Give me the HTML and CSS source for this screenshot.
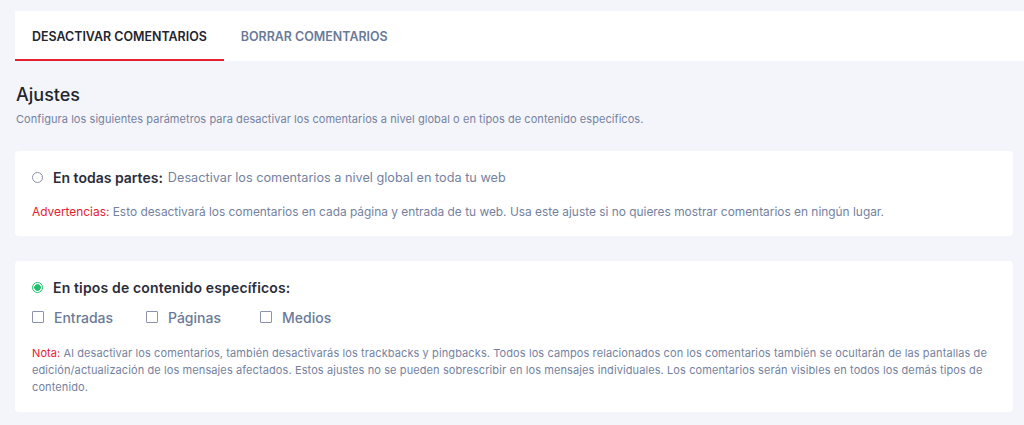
FILE: index.html
```html
<!DOCTYPE html>
<html lang="es">
<head>
<meta charset="utf-8">
<link rel="stylesheet" href="styles.css">
</head>
<body>
<div class="page">
  <nav class="tabs">
    <a class="tab active">DESACTIVAR COMENTARIOS</a>
    <a class="tab">BORRAR COMENTARIOS</a>
  </nav>
  <section class="intro">
    <h2 class="title">Ajustes</h2>
    <p class="desc">Configura los siguientes parámetros para desactivar los comentarios a nivel global o en tipos de contenido específicos.</p>
  </section>
  <div class="card card-global">
    <label class="option">
      <span class="radio"></span>
      <span class="opt-title">En todas partes:</span>
      <span class="opt-desc">Desactivar los comentarios a nivel global en toda tu web</span>
    </label>
    <p class="notice warning"><span class="warn">Advertencias:</span> Esto desactivará los comentarios en cada página y entrada de tu web. Usa este ajuste si no quieres mostrar comentarios en ningún lugar.</p>
  </div>
  <div class="card card-types">
    <label class="option">
      <span class="radio checked"></span>
      <span class="opt-title wide">En tipos de contenido específicos:</span>
    </label>
    <div class="checks">
      <label class="check"><span class="box"></span>Entradas</label>
      <label class="check"><span class="box"></span>Páginas</label>
      <label class="check"><span class="box"></span>Medios</label>
    </div>
    <p class="notice note"><span class="warn">Nota:</span> Al desactivar los comentarios, también desactivarás los trackbacks y pingbacks. Todos los campos relacionados con los comentarios también se ocultarán de las pantallas de edición/actualización de los mensajes afectados. Estos ajustes no se pueden sobrescribir en los mensajes individuales. Los comentarios serán visibles en todos los demás tipos de contenido.</p>
  </div>
</div>
</body>
</html>
```
FILE: styles.css
```css
html, body {
  margin: 0;
  padding: 0;
  background: #f4f5fa;
}
body {
  font-family: Inter, "Noto Sans", sans-serif;
  color: #2c2d3a;
}
.page {
  padding: 11px 0 0 15px;
}
.tabs {
  display: flex;
  background: #fff;
  height: 50px;
}
.tab {
  display: flex;
  align-items: center;
  padding: 0 17px;
  font-size: 12.45px;
  font-weight: 600;
  color: #6b7a99;
  border-bottom: 2px solid transparent;
  box-sizing: border-box;
  padding-top: 2px;
}
.tab.active {
  color: #23252f;
  border-bottom-color: #e5212f;
}
.intro {
  padding: 22px 0 0 1px;
}
.title {
  margin: 0;
  font-size: 18px;
  font-weight: 500;
  line-height: 24px;
  color: #23252f;
}
.desc {
  margin: 5px 0 0;
  font-size: 11px;
  letter-spacing: 0.06px;
  line-height: 14px;
  color: #7482a0;
}
.card {
  background: #fff;
  border-radius: 4px;
  margin-right: 11px;
  padding: 0 17px;
}
.card-global {
  margin-top: 25px;
  padding-top: 17px;
  padding-bottom: 16px;
}
.card-types {
  margin-top: 25px;
  padding-top: 17px;
  padding-bottom: 16px;
}
.option {
  display: flex;
  align-items: center;
  height: 18px;
  font-size: 14px;
}
.radio {
  width: 9px;
  height: 9px;
  border: 1px solid #8a93ab;
  border-radius: 50%;
  margin-right: 10px;
  box-sizing: content-box;
  flex: none;
}
.radio.checked {
  border-color: #1ec26b;
  background: radial-gradient(circle, #1ec26b 0 3px, #fff 3.5px);
}
.opt-title {
  font-weight: 600;
  color: #2c2d3a;
  margin-right: 5px;
}
.opt-title.wide {
  letter-spacing: 0.15px;
}
.opt-desc {
  font-size: 12.7px;
  color: #7482a0;
}
.notice {
  margin: 15px 0 0;
  font-size: 11px;
  letter-spacing: 0.1px;
  line-height: 17px;
  color: #7482a0;
}
.notice.warning {
  margin-top: 17px;
  font-size: 11.9px;
  letter-spacing: 0;
}
.warn {
  color: #e5212f;
}
.checks {
  display: flex;
  margin-top: 12px;
  height: 18px;
}
.check {
  display: flex;
  align-items: center;
  font-size: 14px;
  color: #6b7a99;
  font-weight: 500;
}
.check:nth-child(1) { width: 114px; }
.check:nth-child(2) { width: 114px; }
.box {
  width: 10px;
  height: 10px;
  border: 1px solid #8a93ab;
  border-radius: 1px;
  margin-right: 10px;
  flex: none;
}
.note {
  margin-top: 19px;
}
```
